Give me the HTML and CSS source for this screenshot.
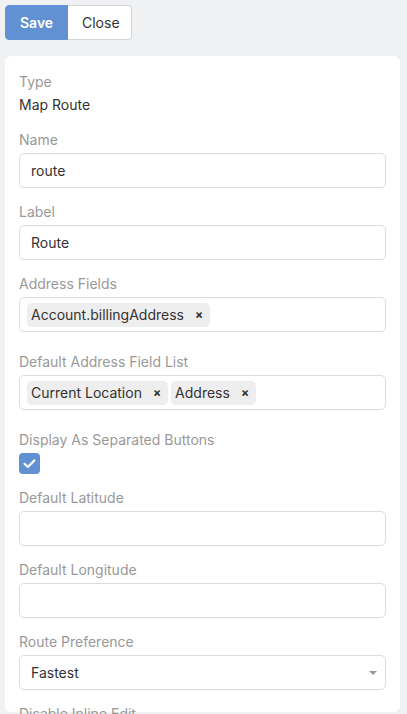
FILE: index.html
```html
<!DOCTYPE html>
<html>
<head>
<meta charset="utf-8">
<link rel="stylesheet" href="styles.css">
</head>
<body>
<div class="page">
  <div class="btn-group">
    <button class="btn btn-primary">Save</button>
    <button class="btn btn-default">Close</button>
  </div>
  <div class="card">
    <div class="field field-static">
      <div class="label">Type</div>
      <div class="value">Map Route</div>
    </div>
    <div class="field">
      <div class="label">Name</div>
      <div class="input">route</div>
    </div>
    <div class="field">
      <div class="label">Label</div>
      <div class="input">Route</div>
    </div>
    <div class="field field-multi">
      <div class="label">Address Fields</div>
      <div class="input multi">
        <span class="tag">Account.billingAddress<span class="x">×</span></span>
      </div>
    </div>
    <div class="field field-multi">
      <div class="label">Default Address Field List</div>
      <div class="input multi">
        <span class="tag">Current Location<span class="x">×</span></span>
        <span class="tag">Address<span class="x">×</span></span>
      </div>
    </div>
    <div class="field field-check">
      <div class="label">Display As Separated Buttons</div>
      <div class="checkbox">
        <svg width="21" height="21" viewBox="0 0 21 21"><path d="M5.5 10.8 L8.9 14 L15.3 7.4" fill="none" stroke="#fff" stroke-width="2.2" stroke-linecap="round" stroke-linejoin="round"/></svg>
      </div>
    </div>
    <div class="field">
      <div class="label">Default Latitude</div>
      <div class="input"></div>
    </div>
    <div class="field">
      <div class="label">Default Longitude</div>
      <div class="input"></div>
    </div>
    <div class="field">
      <div class="label">Route Preference</div>
      <div class="input select">Fastest<span class="caret"></span></div>
    </div>
    <div class="field">
      <div class="label">Disable Inline Edit</div>
    </div>
  </div>
</div>
</body>
</html>
```

FILE: styles.css
```css
html, body {
  margin: 0;
  padding: 0;
  background: #eff1f3;
  font-family: Inter, "Noto Sans", "Liberation Sans", sans-serif;
  font-size: 14px;
  color: #333;
  overflow: hidden;
  height: 714px;
}

.page {
  padding: 5px 7px 0 5px;
}

.btn-group {
  display: flex;
}

.btn {
  height: 35px;
  font-family: inherit;
  font-size: 14px;
  line-height: 20px;
  padding: 0 14px;
  margin: 0;
  border: 1px solid;
  cursor: pointer;
}

.btn-primary {
  width: 63px;
  background: #6190d3;
  border-color: #6190d3;
  color: #fff;
  font-weight: 600;
  border-radius: 4px 0 0 4px;
}

.btn-default {
  width: 64px;
  background: #fff;
  border-color: #d4d6d9;
  border-left: none;
  color: #333;
  border-radius: 0 4px 4px 0;
}

.card {
  margin-top: 16px;
  background: #fff;
  border-radius: 6px;
  padding: 16px 14px 0 14px;
  height: 640px;
}

.field {
  margin-bottom: 14px;
}

.field-static {
  margin-bottom: 15px;
}

.field-multi {
  margin-bottom: 20px;
}

.field-check {
  margin-bottom: 14px;
}

.label {
  color: #999;
  line-height: 20px;
  margin-bottom: 3px;
}

.value {
  line-height: 20px;
  color: #333;
}

.input {
  box-sizing: border-box;
  height: 35px;
  border: 1px solid #dcdcdc;
  border-radius: 5px;
  padding: 0 11px;
  line-height: 33px;
  background: #fff;
  color: #333;
  position: relative;
}

.multi {
  display: flex;
  align-items: center;
  gap: 3px;
  padding: 0 7px;
}

.tag {
  display: inline-flex;
  align-items: center;
  height: 24px;
  line-height: 24px;
  background: #eeeeee;
  border-radius: 5px;
  padding: 0 7px 0 4px;
}

.tag .x {
  margin-left: 11px;
  font-weight: 700;
  font-size: 12px;
  color: #333;
}

.checkbox {
  width: 21px;
  height: 21px;
  border-radius: 4px;
  background: #6190d3;
}

.checkbox svg {
  display: block;
}

.caret {
  position: absolute;
  right: 8px;
  top: 15px;
  width: 0;
  height: 0;
  border-left: 4px solid transparent;
  border-right: 4px solid transparent;
  border-top: 4px solid #999;
}
```
